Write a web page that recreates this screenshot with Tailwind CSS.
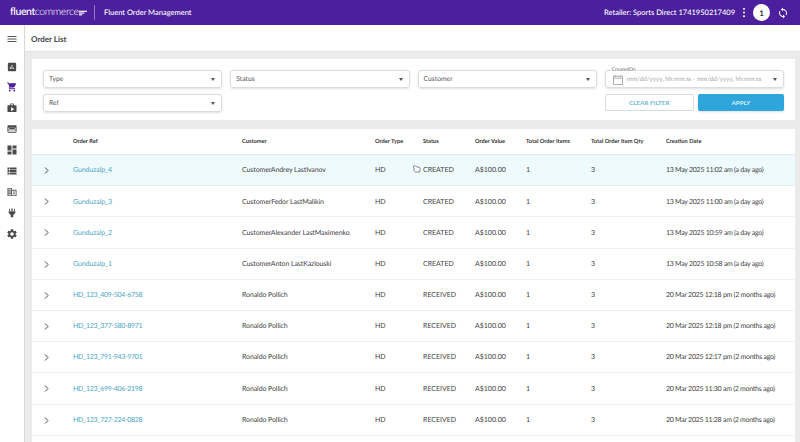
<!DOCTYPE html>
<html lang="en">
  <head>
    <meta charset="UTF-8" />
    <meta name="viewport" content="width=device-width, initial-scale=1.0" />
    <title>Order List</title>
    <script src="https://cdn.jsdelivr.net/npm/@tailwindcss/browser@4"></script>
  </head>

  <body class="font-['Lato',sans-serif] [text-rendering:geometricPrecision] bg-[#ebebeb] text-[#444] h-[442px] w-[800px] overflow-hidden">
    <!-- Top bar -->
    <header class="h-[25px] bg-[#4c1f9c] text-white flex items-center pl-[10px] pr-[11px]">
      <div class="flex items-center w-[75px] text-[10.500px] leading-none tracking-[-0.4px]">
        <span class="font-medium">fluent</span><span class="font-light">commerce</span>
        <svg class="ml-[1px] shrink-0" width="8" height="6" viewBox="0 0 9 6" fill="#fff"><rect width="9" height="1.3" y="0.4" /><rect width="6" height="1.3" y="2.4" /><rect width="3.5" height="1.3" y="4.4" /></svg>
      </div>
      <div class="w-px h-[15px] bg-white/40 ml-[9px] mr-[9px]"></div>
      <span class="text-[7.500px] font-medium">Fluent Order Management</span>
      <span class="ml-auto text-[7.500px] font-medium">Retailer: Sports Direct 1741950217409</span>
      <svg class="ml-[7px]" width="4" height="11" viewBox="0 0 4 11" fill="#fff"><circle cx="2" cy="1.8" r="1" /><circle cx="2" cy="5.5" r="1" /><circle cx="2" cy="9.2" r="1" /></svg>
      <div class="ml-[7px] w-[17px] h-[17px] rounded-full bg-white text-[#333] text-[8px] font-bold flex items-center justify-center">1</div>
      <svg class="ml-[7px]" width="12" height="12" viewBox="0 0 24 24" fill="#fff"><path d="M12 4V1L8 5l4 4V6c3.3 0 6 2.7 6 6 0 1-.25 2-.7 2.8l1.46 1.46C19.54 15.03 20 13.57 20 12c0-4.42-3.58-8-8-8zm0 14c-3.3 0-6-2.7-6-6 0-1 .25-2 .7-2.8L5.24 7.74C4.46 8.97 4 10.43 4 12c0 4.42 3.58 8 8 8v3l4-4-4-4v3z" /></svg>
    </header>

    <div class="flex h-[417px]">
      <!-- Sidebar -->
      <aside class="w-[25px] shrink-0 bg-white border-r border-[#d8d8d8] flex flex-col items-center">
        <div class="h-[27px] flex items-center justify-center">
          <svg width="12" height="12" viewBox="0 0 24 24" fill="#555"><path d="M3 18h18v-2H3v2zm0-5h18v-2H3v2zm0-7v2h18V6H3z" /></svg>
        </div>
        <div class="flex flex-col items-center gap-[10.9px] mt-[9.500px]">
          <svg width="10" height="10" viewBox="0 0 24 24" fill="#4a4a4a"><path d="M19 2H5a3 3 0 0 0-3 3v14a3 3 0 0 0 3 3h14a3 3 0 0 0 3-3V5a3 3 0 0 0-3-3zM9 17H7v-5h2v5zm4 0h-2V7h2v10zm4 0h-2v-3h2v3z" /></svg>
          <svg width="10" height="10" viewBox="1 1 22 22" fill="#4c1f9c"><path d="M7 18c-1.1 0-2 .9-2 2s.9 2 2 2 2-.9 2-2-.9-2-2-2zM1 2v2h2l3.6 7.6L5.25 14c-.16.28-.25.61-.25 1 0 1.1.9 2 2 2h12v-2H7.42c-.14 0-.25-.11-.25-.25l.03-.12.9-1.63h7.45c.75 0 1.41-.41 1.75-1.03l3.58-6.49A1 1 0 0 0 20 4H5.21l-.94-2H1zm16 16c-1.1 0-2 .9-2 2s.9 2 2 2 2-.9 2-2-.9-2-2-2z" /></svg>
          <svg width="10" height="10" viewBox="1 1 22 22" fill="#4a4a4a"><path d="M20 6h-4V4c0-1.1-.9-2-2-2h-4c-1.1 0-2 .9-2 2v2H4c-1.1 0-2 .9-2 2v11c0 1.1.9 2 2 2h16c1.1 0 2-.9 2-2V8c0-1.1-.9-2-2-2zM10 4h4v2h-4V4zm0 15V10l7 4.5-7 4.5z" /></svg>
          <svg width="10" height="10" viewBox="1 1 22 22" fill="#4a4a4a"><path d="M20 4H4c-1.1 0-2 .9-2 2v12c0 1.1.9 2 2 2h16c1.1 0 2-.9 2-2V6c0-1.1-.9-2-2-2zm0 14H4v-3h16v3zm0-5H4V9h16v4zM6 10h12v2H6z" /></svg>
          <svg width="10" height="10" viewBox="2 2 20 20" fill="#4a4a4a"><path d="M3 13h8V3H3v10zm0 8h8v-6H3v6zm10 0h8V11h-8v10zm0-18v6h8V3h-8z" /></svg>
          <svg width="10" height="10" viewBox="2 2 20 20" fill="#4a4a4a"><path d="M3 9h4V5H3v4zm0 5h4v-4H3v4zm0 5h4v-4H3v4zm5-5h13v-4H8v4zm0 5h13v-4H8v4zM8 5v4h13V5H8z" /></svg>
          <svg width="10" height="10" viewBox="1 2 22 20" fill="#5a5a5a"><path d="M12 7V3H2v18h20V7H12zM10 19H4v-2h6v2zm0-4H4v-2h6v2zm0-4H4V9h6v2zm0-4H4V5h6v2zm10 12h-8V9h8v10zm-2-8h-4v2h4v-2zm0 4h-4v2h4v-2z" /></svg>
          <svg width="10" height="10" viewBox="0 0 24 24" fill="#4a4a4a"><path d="M5 2h2v5H5zM17 2h2v5h-2zM10.500 1h3v6h-3zM4 8h16v4l-5 5v5H9v-5l-5-5z" /></svg>
          <svg width="10" height="10" viewBox="2 2 20 20" fill="#4a4a4a"><path d="M19.14 12.94c.04-.3.06-.61.06-.94s-.02-.64-.07-.94l2.03-1.58a.49.49 0 0 0 .12-.61l-1.92-3.32a.49.49 0 0 0-.59-.22l-2.39.96c-.5-.38-1.03-.7-1.62-.94l-.36-2.54a.48.48 0 0 0-.48-.41h-3.84c-.24 0-.43.17-.47.41l-.36 2.54c-.59.24-1.13.57-1.62.94l-2.39-.96a.48.48 0 0 0-.59.22L2.74 8.87c-.12.21-.08.47.12.61l2.03 1.58c-.05.3-.09.63-.09.94s.02.64.07.94l-2.03 1.58a.49.49 0 0 0-.12.61l1.92 3.32c.12.22.37.29.59.22l2.39-.96c.5.38 1.03.7 1.62.94l.36 2.54c.05.24.24.41.48.41h3.84c.24 0 .44-.17.47-.41l.36-2.54c.59-.24 1.13-.56 1.62-.94l2.39.96c.22.08.47 0 .59-.22l1.92-3.32a.48.48 0 0 0-.12-.61l-2.01-1.58zM12 15.6A3.6 3.6 0 1 1 12 8.400a3.6 3.6 0 0 1 0 7.200z" /></svg>
        </div>
      </aside>

      <div class="flex-1 min-w-0 h-[417px] overflow-hidden">
        <!-- Page title -->
        <div class="h-[27px] bg-white border-b border-[#e2e2e2] flex items-center pl-[6px] pt-[1px]">
          <h1 class="text-[8px] font-bold text-[#444]">Order List</h1>
        </div>

        <div class="pl-[7px] pr-[5px] pt-[7px]">
          <!-- Filters -->
          <section class="h-[61px] bg-white px-[11px] pt-[11px] grid grid-cols-4 gap-x-[8px] gap-y-[6px] auto-rows-[18px]">
            <div class="border border-[#dcdcdc] rounded-[3px] shadow-sm flex items-center justify-between pl-[5px] pr-[6px] pt-[1px] text-[6.800px] text-[#555]">Type<span class="w-0 h-0 border-x-[2.500px] border-x-transparent border-t-[3px] border-t-[#555]"></span></div>
            <div class="border border-[#dcdcdc] rounded-[3px] shadow-sm flex items-center justify-between pl-[5px] pr-[6px] pt-[1px] text-[6.800px] text-[#555]">Status<span class="w-0 h-0 border-x-[2.500px] border-x-transparent border-t-[3px] border-t-[#555]"></span></div>
            <div class="border border-[#dcdcdc] rounded-[3px] shadow-sm flex items-center justify-between pl-[5px] pr-[6px] pt-[1px] text-[6.800px] text-[#555]">Customer<span class="w-0 h-0 border-x-[2.500px] border-x-transparent border-t-[3px] border-t-[#555]"></span></div>
            <div class="relative border border-[#dcdcdc] rounded-[3px] shadow-sm flex items-center pl-[7px] pr-[6px] pt-[1px] text-[6.300px] text-[#aaa]">
              <span class="absolute -top-[4px] left-[5px] bg-white px-[1px] text-[5px] leading-[7px] text-[#666]">CreatedOn</span>
              <svg class="mr-[4px] shrink-0" width="10" height="10" viewBox="0 0 10 10" fill="none" stroke="#999" stroke-width="0.8"><rect x="0.500" y="1.200" width="9" height="8.300" /><path d="M0.500 3.200h9M2.500 0v1.500M7.500 0v1.500" /></svg>
              <span class="whitespace-nowrap">mm/dd/yyyy, hh:mm:ss - mm/dd/yyyy, hh:mm:ss</span>
              <span class="ml-auto w-0 h-0 border-x-[2.500px] border-x-transparent border-t-[3px] border-t-[#555]"></span>
            </div>
            <div class="border border-[#dcdcdc] rounded-[3px] shadow-sm flex items-center justify-between pl-[5px] pr-[6px] text-[6.800px] text-[#555]">Ref<span class="w-0 h-0 border-x-[2.500px] border-x-transparent border-t-[3px] border-t-[#555]"></span></div>
            <div class="col-start-4 flex gap-[4px] h-[17px]">
              <button class="w-[89px] border border-[#d5dfe3] rounded-[2px] bg-white text-[6.300px] font-bold text-[#6fbbd4] flex items-center justify-center">CLEAR FILTER</button>
              <button class="flex-1 rounded-[2px] bg-[#2ea6dc] shadow-sm text-[6.300px] font-bold text-[#d8f0fa] flex items-center justify-center">APPLY</button>
            </div>
          </section>

          <!-- Orders table -->
          <section class="mt-[9px] bg-white text-[7px]">
            <div class="h-[26px] pt-[2px] border-b border-[#dfe9ec] grid grid-cols-[41px_169px_133px_48px_52px_51px_65px_75px_1fr] items-center font-bold text-[5.700px] text-[#333]">
              <span></span><span>Order Ref</span><span>Customer</span><span>Order Type</span><span>Status</span><span>Order Value</span><span>Total Order Items</span><span>Total Order Item Qty</span><span>Creation Date</span>
            </div>

            <div class="relative h-[31.200px] pt-[1px] bg-[#effafc] border-b border-[#e9eeef] grid grid-cols-[41px_169px_133px_48px_52px_51px_65px_75px_1fr] items-center whitespace-nowrap">
              <svg class="ml-[12px]" width="5" height="7" viewBox="0 0 5 7" fill="none" stroke="#444" stroke-width="1"><path d="M1 .5 4 3.500 1 6.500" /></svg>
              <span class="text-[#4ea6c4] tracking-[-0.1px]">Gunduzalp_4</span><span class="tracking-[-0.1px]">CustomerAndrey LastIvanov</span><span>HD</span><span>CREATED</span><span>A$100.00</span><span>1</span><span>3</span><span class="tracking-[-0.27px]">13 May 2025 11:02 am (a day ago)</span>
              <svg class="absolute left-[380px] top-[10px]" width="9" height="9" viewBox="0 0 9 9" fill="#fff" stroke="#555" stroke-width="0.7"><path d="M1 1.500 3 .500l1.500 1.500H7l1.200 2-.5 3H3.500L1.800 5.500 2.300 3.500z" /></svg>
            </div>
            <div class="h-[31.200px] pt-[1px] border-b border-[#f0f0f0] grid grid-cols-[41px_169px_133px_48px_52px_51px_65px_75px_1fr] items-center whitespace-nowrap">
              <svg class="ml-[12px]" width="5" height="7" viewBox="0 0 5 7" fill="none" stroke="#444" stroke-width="1"><path d="M1 .5 4 3.500 1 6.500" /></svg>
              <span class="text-[#4ea6c4] tracking-[-0.1px]">Gunduzalp_3</span><span class="tracking-[-0.1px]">CustomerFedor LastMalikin</span><span>HD</span><span>CREATED</span><span>A$100.00</span><span>1</span><span>3</span><span class="tracking-[-0.27px]">13 May 2025 11:00 am (a day ago)</span>
            </div>
            <div class="h-[31.200px] pt-[1px] border-b border-[#f0f0f0] grid grid-cols-[41px_169px_133px_48px_52px_51px_65px_75px_1fr] items-center whitespace-nowrap">
              <svg class="ml-[12px]" width="5" height="7" viewBox="0 0 5 7" fill="none" stroke="#444" stroke-width="1"><path d="M1 .5 4 3.500 1 6.500" /></svg>
              <span class="text-[#4ea6c4] tracking-[-0.1px]">Gunduzalp_2</span><span class="tracking-[-0.1px]">CustomerAlexander LastMaximenko</span><span>HD</span><span>CREATED</span><span>A$100.00</span><span>1</span><span>3</span><span class="tracking-[-0.27px]">13 May 2025 10:59 am (a day ago)</span>
            </div>
            <div class="h-[31.200px] pt-[1px] border-b border-[#f0f0f0] grid grid-cols-[41px_169px_133px_48px_52px_51px_65px_75px_1fr] items-center whitespace-nowrap">
              <svg class="ml-[12px]" width="5" height="7" viewBox="0 0 5 7" fill="none" stroke="#444" stroke-width="1"><path d="M1 .5 4 3.500 1 6.500" /></svg>
              <span class="text-[#4ea6c4] tracking-[-0.1px]">Gunduzalp_1</span><span class="tracking-[-0.1px]">CustomerAnton LastKazlouski</span><span>HD</span><span>CREATED</span><span>A$100.00</span><span>1</span><span>3</span><span class="tracking-[-0.27px]">13 May 2025 10:58 am (a day ago)</span>
            </div>
            <div class="h-[31.200px] pt-[1px] border-b border-[#f0f0f0] grid grid-cols-[41px_169px_133px_48px_52px_51px_65px_75px_1fr] items-center whitespace-nowrap">
              <svg class="ml-[12px]" width="5" height="7" viewBox="0 0 5 7" fill="none" stroke="#444" stroke-width="1"><path d="M1 .5 4 3.500 1 6.500" /></svg>
              <span class="text-[#4ea6c4] tracking-[-0.3px]">HD_123_409-504-6758</span><span class="tracking-[-0.1px]">Ronaldo Pollich</span><span>HD</span><span>RECEIVED</span><span>A$100.00</span><span>1</span><span>3</span><span class="tracking-[-0.27px]">20 Mar 2025 12:18 pm (2 months ago)</span>
            </div>
            <div class="h-[31.200px] pt-[1px] border-b border-[#f0f0f0] grid grid-cols-[41px_169px_133px_48px_52px_51px_65px_75px_1fr] items-center whitespace-nowrap">
              <svg class="ml-[12px]" width="5" height="7" viewBox="0 0 5 7" fill="none" stroke="#444" stroke-width="1"><path d="M1 .5 4 3.500 1 6.500" /></svg>
              <span class="text-[#4ea6c4] tracking-[-0.3px]">HD_123_377-580-8971</span><span class="tracking-[-0.1px]">Ronaldo Pollich</span><span>HD</span><span>RECEIVED</span><span>A$100.00</span><span>1</span><span>3</span><span class="tracking-[-0.27px]">20 Mar 2025 12:18 pm (2 months ago)</span>
            </div>
            <div class="h-[31.200px] pt-[1px] border-b border-[#f0f0f0] grid grid-cols-[41px_169px_133px_48px_52px_51px_65px_75px_1fr] items-center whitespace-nowrap">
              <svg class="ml-[12px]" width="5" height="7" viewBox="0 0 5 7" fill="none" stroke="#444" stroke-width="1"><path d="M1 .5 4 3.500 1 6.500" /></svg>
              <span class="text-[#4ea6c4] tracking-[-0.3px]">HD_123_791-943-9701</span><span class="tracking-[-0.1px]">Ronaldo Pollich</span><span>HD</span><span>RECEIVED</span><span>A$100.00</span><span>1</span><span>3</span><span class="tracking-[-0.27px]">20 Mar 2025 12:17 pm (2 months ago)</span>
            </div>
            <div class="h-[31.200px] pt-[1px] border-b border-[#f0f0f0] grid grid-cols-[41px_169px_133px_48px_52px_51px_65px_75px_1fr] items-center whitespace-nowrap">
              <svg class="ml-[12px]" width="5" height="7" viewBox="0 0 5 7" fill="none" stroke="#444" stroke-width="1"><path d="M1 .5 4 3.500 1 6.500" /></svg>
              <span class="text-[#4ea6c4] tracking-[-0.3px]">HD_123_699-406-2198</span><span class="tracking-[-0.1px]">Ronaldo Pollich</span><span>HD</span><span>RECEIVED</span><span>A$100.00</span><span>1</span><span>3</span><span class="tracking-[-0.27px]">20 Mar 2025 11:30 am (2 months ago)</span>
            </div>
            <div class="h-[31.200px] pt-[1px] border-b border-[#f0f0f0] grid grid-cols-[41px_169px_133px_48px_52px_51px_65px_75px_1fr] items-center whitespace-nowrap">
              <svg class="ml-[12px]" width="5" height="7" viewBox="0 0 5 7" fill="none" stroke="#444" stroke-width="1"><path d="M1 .5 4 3.500 1 6.500" /></svg>
              <span class="text-[#4ea6c4] tracking-[-0.3px]">HD_123_727-224-0828</span><span class="tracking-[-0.1px]">Ronaldo Pollich</span><span>HD</span><span>RECEIVED</span><span>A$100.00</span><span>1</span><span>3</span><span class="tracking-[-0.27px]">20 Mar 2025 11:28 am (2 months ago)</span>
            </div>
            <div class="h-[8px]"></div>
          </section>
        </div>
      </div>
    </div>
  </body>
</html>
